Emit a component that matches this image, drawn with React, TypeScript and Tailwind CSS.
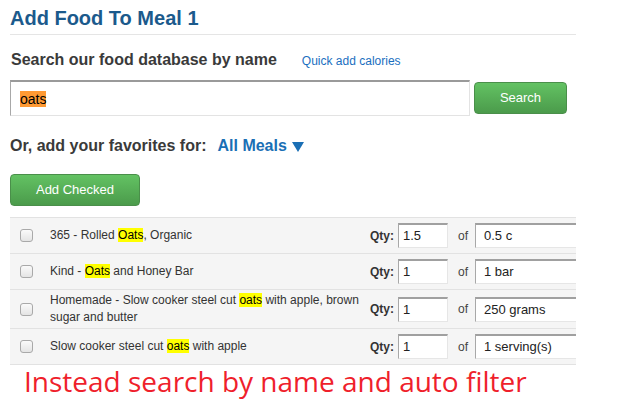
type Food = {
  parts: [string, string, string];
  qty: string;
  unit: string;
  tall?: boolean;
};

const foods: Food[] = [
  { parts: ["365 - Rolled ", "Oats", ", Organic"], qty: "1.5", unit: "0.5 c" },
  { parts: ["Kind - ", "Oats", " and Honey Bar"], qty: "1", unit: "1 bar" },
  {
    parts: ["Homemade - Slow cooker steel cut ", "oats", " with apple, brown sugar and butter"],
    qty: "1",
    unit: "250 grams",
    tall: true,
  },
  { parts: ["Slow cooker steel cut ", "oats", " with apple"], qty: "1", unit: "1 serving(s)" },
];

function GreenButton({ label, className }: { label: string; className: string }) {
  return (
    <button
      className={
        "h-[32px] rounded-[4px] border border-[#4a8f4a] bg-gradient-to-b from-[#63c263] to-[#4b9b4b] text-[13px] text-white " +
        className
      }
    >
      {label}
    </button>
  );
}

function FoodRow({ food }: { food: Food }) {
  return (
    <div
      className={
        "flex items-center border-t border-[#e2e2e2] bg-[#f5f5f5] " + (food.tall ? "h-[39px]" : "h-[36px]")
      }
    >
      <div className="ml-[10px] h-[13px] w-[13px] shrink-0 rounded-[3px] border border-[#a9a9a9] bg-gradient-to-b from-[#fafafa] to-[#e4e4e4]" />
      <div className="ml-[17px] w-[312px] shrink-0 text-[12px] leading-[17px] text-[#333]">
        {food.parts[0]}
        <span className="bg-[#ffff00] text-black">{food.parts[1]}</span>
        {food.parts[2]}
      </div>
      <span className="ml-[8px] shrink-0 text-[12px] font-bold text-[#333]">Qty:</span>
      <div className="ml-[4px] flex h-[25px] w-[50px] shrink-0 items-center border border-t-2 border-t-[#a0a0a0] border-l-[#a8a8a8] border-r-[#e6e6e6] border-b-[#e6e6e6] bg-white pl-[4px] text-[13px] text-[#222]">
        {food.qty}
      </div>
      <span className="ml-[10px] shrink-0 text-[12px] text-[#444]">of</span>
      <div className="ml-[7px] flex h-[25px] w-[110px] shrink-0 items-center border border-t-2 border-t-[#a0a0a0] border-l-[#a8a8a8] border-r-[#e6e6e6] border-b-[#e6e6e6] bg-white pl-[8px] text-[13px] text-[#222]">
        {food.unit}
      </div>
    </div>
  );
}

export default function App() {
  return (
    <div className="h-[400px] w-[640px] overflow-hidden bg-white font-['Liberation_Sans',Arial,sans-serif]">
      <div className="ml-[10px] w-[566px]">
        <div className="border-b border-[#e5e5e5] pt-[6px] pb-[4px] text-[20px] font-bold leading-[24px] text-[#1b5a8c]">
          Add Food To Meal 1
        </div>

        <div className="mt-[15px] flex items-baseline leading-[20px]">
          <span className="ml-[1px] text-[16px] font-bold text-[#3a3a3a]">Search our food database by name</span>
          <span className="ml-[25px] text-[12px] text-[#1a6fc0]">Quick add calories</span>
        </div>

        <div className="mt-[9px] flex h-[36px] items-center">
          <div className="flex h-[36px] w-[460px] items-center border border-t-2 border-t-[#9a9a9a] border-l-[#a8a8a8] border-r-[#e3e3e3] border-b-[#e3e3e3] bg-white pl-[9px]">
            <span className="bg-[#ff9a33] text-[14px] leading-[16px] text-black">oats</span>
          </div>
          <GreenButton label="Search" className="ml-[4px] w-[93px]" />
        </div>

        <div className="mt-[20px] flex items-center text-[16px] font-bold leading-[20px]">
          <span className="text-[#3a3a3a]">Or, add your favorites for:</span>
          <span className="ml-[11px] text-[#1a6fb5]">All Meals</span>
          <svg className="ml-[5px] mt-[2px]" width="12" height="10" viewBox="0 0 12 10">
            <path d="M0 0 H12 L6 10 Z" fill="#1a6fb5" />
          </svg>
        </div>

        <GreenButton label="Add Checked" className="mt-[18px] w-[130px]" />

        <div className="mt-[11px] overflow-hidden border-b border-[#e2e2e2]">
          {foods.map((food, i) => (
            <FoodRow key={i} food={food} />
          ))}
        </div>
      </div>

      <div className="ml-[24px] mt-[1px] font-['Open_Sans',sans-serif] text-[28px] leading-[30px] text-[#ef1f2c]">
        Instead search by name and auto filter
      </div>
    </div>
  );
}
